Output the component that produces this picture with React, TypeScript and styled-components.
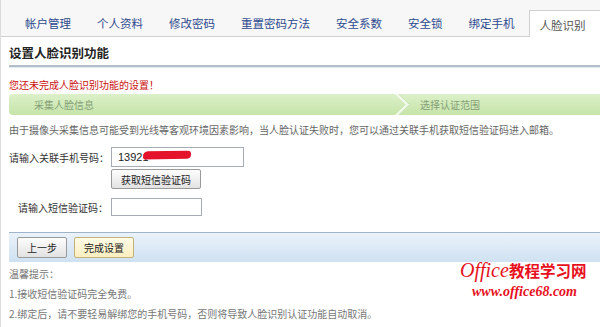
import styled, { createGlobalStyle } from "styled-components";

const GlobalStyle = createGlobalStyle`
  html, body {
    margin: 0;
    padding: 0;
    background: #ffffff;
  }
  body {
    font-family: "Noto Sans CJK SC", "Liberation Sans", sans-serif;
    color: #333;
  }
`

const Page = styled.div`
  width: 600px;
  height: 327px;
  overflow: hidden;
  position: relative;
  border-left: 1px solid #dcdcdc;
  box-sizing: border-box;
`

const TabBar = styled.nav`
  height: 36px;
  background: #f7f7f7;
  border-bottom: 1px solid #d0d0d0;
  display: flex;
  align-items: flex-end;
  padding-left: 11px;
`

const Tab = styled.div<{ $active?: boolean }>`
  flex: none;
  height: ${(p) => (p.$active ? "27px" : "26px")};
  padding: 0 12px;
  font-size: 11.5px;
  line-height: 24px;
  white-space: nowrap;
  color: ${(p) => (p.$active ? "#555" : "#2e4a8e")};
  background: ${(p) => (p.$active ? "#fff" : "transparent")};
  border: 1px solid ${(p) => (p.$active ? "#cfcfcf" : "transparent")};
  border-bottom: none;
  margin-bottom: ${(p) => (p.$active ? "-1px" : "0")};
  box-sizing: border-box;
  ${(p) => p.$active && "padding: 2px 24px 0 10px; line-height: 24px; margin-left: 1px;"}
`

const Content = styled.main`
  padding-left: 8px;
`

const Heading = styled.h1`
  margin: 0;
  height: 30px;
  font-size: 12.5px;
  font-weight: bold;
  line-height: 32px;
  color: #222;
  border-bottom: 2px solid #b3bfcb;
  box-shadow: 0 1px 0 #e2e8ee;
  box-sizing: border-box;
`

const Warning = styled.p`
  margin: 10px 0 0;
  font-size: 10px;
  line-height: 16px;
  color: #cc1111;
`

const Steps = styled.div`
  margin-top: 1px;
  height: 21px;
  border-radius: 4px 0 0 4px;
  background: linear-gradient(#dcf0c9, #c6e4a9);
  display: flex;
  align-items: center;
`

const Step = styled.span<{ $offset: number; $width?: number }>`
  font-size: 10px;
  color: #85a076;
  padding-left: ${(p) => p.$offset}px;
  width: ${(p) => (p.$width ? `${p.$width}px` : "auto")};
  box-sizing: border-box;
`

const Chevron = styled.svg`
  width: 16px;
  height: 21px;
  flex: none;
`

const Description = styled.p`
  margin: 7px 0 0;
  font-size: 10px;
  line-height: 16px;
  color: #666;
  white-space: nowrap;
`

const Form = styled.div`
  margin-top: 9px;
  display: grid;
  grid-template-columns: 99px auto;
  column-gap: 3px;
  align-items: center;
`

const Label = styled.label`
  font-size: 10px;
  color: #333;
  text-align: right;
  white-space: nowrap;
`

const FieldWrap = styled.div`
  position: relative;
  display: flex;
  flex-direction: column;
  align-items: flex-start;
`

const Field = styled.input<{ $width: number; $height: number }>`
  width: ${(p) => p.$width}px;
  height: ${(p) => p.$height}px;
  box-sizing: border-box;
  border: 1px solid #a5acb5;
  padding: 0 6px;
  font-family: "Liberation Sans", sans-serif;
  font-size: 11px;
  color: #222;
  outline: none;
`

const Redaction = styled.span`
  position: absolute;
  left: 32px;
  top: 4px;
  width: 48px;
  height: 8px;
  background: #e5122b;
  border-radius: 5px 3px 4px 2px;
  transform: rotate(-1deg);
`

const Button = styled.button<{ $primary?: boolean }>`
  height: 21px;
  padding: 0 9px;
  font-family: "Noto Sans CJK SC", sans-serif;
  font-size: 10px;
  color: #222;
  border: 1px solid ${(p) => (p.$primary ? "#c4b07a" : "#9a9a9a")};
  border-radius: 2px;
  background: ${(p) =>
    p.$primary
      ? "linear-gradient(#fffbe6, #fbeec0)"
      : "linear-gradient(#fdfdfd, #e2e2e2)"};
  white-space: nowrap;
  cursor: pointer;
`

const CodeButton = styled(Button)`
  margin-top: 2px;
  height: 20px;
  width: 90px;
  padding: 0;
`

const Spacer = styled.div`
  height: 9px;
  grid-column: 1 / 3;
`

const ActionBar = styled.div`
  margin-top: 16px;
  height: 30px;
  border-top: 1px solid #9fb4c8;
  background: linear-gradient(#eaf2fa, #cfe1f1);
  display: flex;
  align-items: center;
  gap: 7px;
  padding-left: 8px;
  box-sizing: border-box;
`

const Tips = styled.div`
  margin-top: 2px;
  font-size: 10px;
  line-height: 20px;
  color: #777;
  white-space: nowrap;
`

const Watermark = styled.div`
  position: absolute;
  left: 459px;
  top: 260px;
  color: #e8101c;
  line-height: 1;
  text-shadow: 0 0 2px #fff;
`

const MarkTitle = styled.div`
  display: flex;
  align-items: baseline;
`

const MarkOffice = styled.span`
  font-family: "Liberation Serif", serif;
  font-style: italic;
  font-size: 20px;
`

const MarkCn = styled.span`
  font-family: "Noto Sans CJK SC", sans-serif;
  font-weight: bold;
  font-size: 15.5px;
`

const MarkUrl = styled.div`
  margin: 5px 0 0 12px;
  font-family: "Liberation Serif", serif;
  font-style: italic;
  font-weight: bold;
  font-size: 14px;
`

const tabs = ["帐户管理", "个人资料", "修改密码", "重置密码方法", "安全系数", "安全锁", "绑定手机", "人脸识别"];

export default function App() {
  return (
    <Page>
      <GlobalStyle />
      <TabBar>
        {tabs.map((t, i) => (
          <Tab key={t} $active={i === tabs.length - 1}>
            {t}
          </Tab>
        ))}
      </TabBar>
      <Content>
        <Heading>设置人脸识别功能</Heading>
        <Warning>您还未完成人脸识别功能的设置！</Warning>
        <Steps>
          <Step $offset={25} $width={386}>采集人脸信息</Step>
          <Chevron viewBox="0 0 16 21">
            <path d="M1 -1 L13 10.5 L1 22" fill="none" stroke="#f4fbee" strokeWidth="3" />
            <path d="M2.5 -1 L14.5 10.5 L2.5 22" fill="none" stroke="#b5d497" strokeWidth="0.8" />
          </Chevron>
          <Step $offset={9}>选择认证范围</Step>
        </Steps>
        <Description>
          由于摄像头采集信息可能受到光线等客观环境因素影响，当人脸认证失败时，您可以通过关联手机获取短信验证码进入邮箱。
        </Description>
        <Form>
          <Label htmlFor="phone">请输入关联手机号码：</Label>
          <FieldWrap>
            <Field id="phone" $width={133} $height={20} defaultValue="13921" />
            <Redaction />
          </FieldWrap>
          <div />
          <CodeButton>获取短信验证码</CodeButton>
          <Spacer />
          <Label htmlFor="code">请输入短信验证码：</Label>
          <Field id="code" $width={91} $height={18} />
        </Form>
        <ActionBar>
          <Button>上一步</Button>
          <Button $primary>完成设置</Button>
        </ActionBar>
        <Tips>
          <div>温馨提示：</div>
          <div>1.接收短信验证码完全免费。</div>
          <div>2.绑定后，请不要轻易解绑您的手机号码，否则将导致人脸识别认证功能自动取消。</div>
        </Tips>
      </Content>
      <Watermark>
        <MarkTitle>
          <MarkOffice>Office</MarkOffice>
          <MarkCn>教程学习网</MarkCn>
        </MarkTitle>
        <MarkUrl>www.office68.com</MarkUrl>
      </Watermark>
    </Page>
  );
}
